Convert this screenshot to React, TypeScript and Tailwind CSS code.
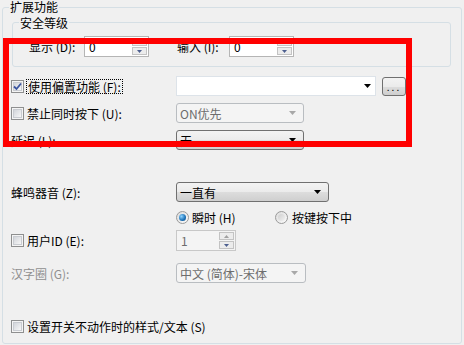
import { ReactElement, ReactNode } from 'react'

const textBase = "font-['Noto_Sans_CJK_SC',sans-serif] text-[12px] leading-[13px] text-black"

function Checkbox({ checked = false }: { checked?: boolean }): ReactElement {
  return (
    <span className="relative flex h-[13px] w-[13px] shrink-0 items-center justify-center border border-[#8e8f8f] bg-[#f4f4f4]">
      <span className="h-[9px] w-[9px] border border-[#c9ccd1] bg-gradient-to-br from-[#d2d5da] to-[#f7f7f7]" />
      {checked && (
        <svg className="absolute left-[1px] top-[1px]" width="9" height="9" viewBox="0 0 9 9">
          <path d="M1 4.5 L3.5 7 L8 1.5" fill="none" stroke="#3b55a0" strokeWidth="1.8" />
        </svg>
      )}
    </span>
  )
}

function Radio({ checked = false }: { checked?: boolean }): ReactElement {
  return (
    <span className="flex h-[13px] w-[13px] shrink-0 items-center justify-center rounded-full border border-[#9a9a9a] bg-gradient-to-br from-[#dcdcdc] to-[#fbfbfb]">
      {checked ? (
        <span className="h-[7px] w-[7px] rounded-full bg-[radial-gradient(circle_at_35%_35%,#8fd4ff,#1a6fb5_60%,#0c4a82)]" />
      ) : (
        <span className="h-[7px] w-[7px] rounded-full bg-gradient-to-br from-[#cfcfcf] to-[#f2f2f2]" />
      )}
    </span>
  )
}

function Arrow({ color = '#000' }: { color?: string }): ReactElement {
  return (
    <svg width="7" height="4" viewBox="0 0 7 4">
      <path d="M0 0 H7 L3.5 4 Z" fill={color} />
    </svg>
  )
}

function SpinButton({ up }: { up?: boolean }): ReactElement {
  return (
    <span className="flex flex-1 items-center justify-center border border-[#c3c3c3] bg-[#ececec]">
      <svg width="5" height="3" viewBox="0 0 5 3">
        <path d={up ? 'M0 3 H5 L2.5 0 Z' : 'M0 0 H5 L2.5 3 Z'} fill={up ? '#a0a0a0' : '#4d5f8f'} />
      </svg>
    </span>
  )
}

function SpinBox({ value, width, disabled }: { value: string; width: string; disabled?: boolean }): ReactElement {
  return (
    <div className={`flex h-[21px] ${width} border ${disabled ? 'border-[#c8c8c8] bg-[#f4f4f4]' : 'border-[#b5b5b5] bg-white'}`}>
      <span className={`flex-1 pl-[4px] pt-[3px] ${disabled ? 'text-[#6d6d6d]' : ''}`}>{value}</span>
      <div className="flex w-[17px] flex-col gap-[1px] p-[1px]">
        <SpinButton up />
        <SpinButton />
      </div>
    </div>
  )
}

function DropList({ value, width, disabled }: { value: string; width: string; disabled?: boolean }): ReactElement {
  const look = disabled
    ? 'border-[#b9bdc1] bg-[#f4f4f4] text-[#6d6d6d]'
    : 'border-[#707070] bg-[linear-gradient(#f3f3f3,#ebebeb_50%,#dddddd_50%,#cfcfcf)] text-black'
  return (
    <div className={`flex h-[20px] ${width} items-center justify-between rounded-[3px] border pl-[3px] pr-[7px] ${look}`}>
      <span>{value}</span>
      <Arrow color={disabled ? '#a8a8a8' : '#000'} />
    </div>
  )
}

function Row({ label, children, className = '' }: { label: ReactNode; children?: ReactNode; className?: string }): ReactElement {
  return (
    <div className={`flex items-center pl-[8px] ${className}`}>
      <div className="flex w-[165px] items-center">{label}</div>
      {children}
    </div>
  )
}

export default function App(): ReactElement {
  return (
    <div className={`relative h-[345px] w-[464px] bg-[#f0f0f0] ${textBase}`}>
      <fieldset className="ml-[2px] h-[344px] w-[460px] rounded-[3px] border border-[#d5dfe5] p-0">
        <legend className="ml-[6px] px-[1px] leading-[14px]">扩展功能</legend>

        <fieldset className="ml-[9px] mr-[10px] mt-[2px] rounded-[3px] border border-[#d5dfe5] px-0 pb-[9px] pt-[7px]">
          <legend className="ml-[6px] px-[1px]">安全等级</legend>
          <div className="flex items-center pl-[16px]">
            <span className="w-[55px]">显示 (D):</span>
            <SpinBox value="0" width="w-[65px]" />
            <span className="ml-[28px] w-[52px]">输入 (I):</span>
            <SpinBox value="0" width="w-[65px]" />
          </div>
        </fieldset>

        <div className="mt-[9px] flex flex-col gap-[7px]">
          <Row
            label={
              <>
                <Checkbox checked />
                <span className="ml-[2px] border border-dotted border-black px-[1px]">使用偏置功能 (F):</span>
              </>
            }
          >
            <div className="flex h-[20px] w-[200px] items-center justify-end border border-[#dde3e9] bg-white pr-[4px]">
              <Arrow />
            </div>
            <div className="ml-[6px] flex h-[19px] w-[24px] items-center justify-center rounded-[3px] border border-[#707070] bg-[linear-gradient(#f3f3f3,#ebebeb_50%,#dddddd_50%,#cfcfcf)] text-[10px] tracking-[2px]">
              ...
            </div>
          </Row>
          <Row
            label={
              <>
                <Checkbox />
                <span className="ml-[3px]">禁止同时按下 (U):</span>
              </>
            }
          >
            <DropList value="ON优先" width="w-[128px]" disabled />
          </Row>
          <Row label={<span>延迟 (L):</span>}>
            <DropList value="无" width="w-[128px]" />
          </Row>
        </div>

        <Row label={<span>蜂鸣器音 (Z):</span>} className="mt-[32px]">
          <DropList value="一直有" width="w-[153px]" />
        </Row>

        <Row label={null} className="mt-[9px] h-[13px]">
          <Radio checked />
          <span className="ml-[3px] w-[83px]">瞬时 (H)</span>
          <Radio />
          <span className="ml-[4px]">按键按下中</span>
        </Row>

        <Row
          label={
            <>
              <Checkbox />
              <span className="ml-[3px]">用户ID (E):</span>
            </>
          }
          className="mt-[6px]"
        >
          <SpinBox value="1" width="w-[60px]" disabled />
        </Row>

        <Row label={<span className="text-[#8f8f8f]">汉字圈 (G):</span>} className="mt-[12px]">
          <DropList value="中文 (简体)-宋体" width="w-[130px]" disabled />
        </Row>

        <div className="mt-[37px] flex items-center pl-[8px]">
          <Checkbox />
          <span className="ml-[3px]">设置开关不动作时的样式/文本 (S)</span>
        </div>
      </fieldset>

      <div className="pointer-events-none absolute left-[3px] top-[38px] h-[109px] w-[409px] border-[6px] border-[#ff0000]" />
    </div>
  )
}
